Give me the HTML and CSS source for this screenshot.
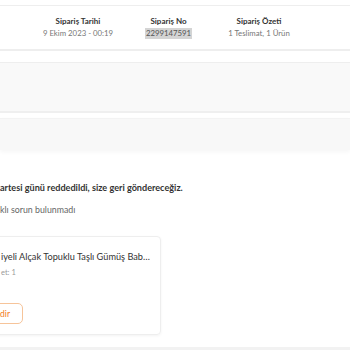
FILE: index.html
```html
<!DOCTYPE html>
<html lang="tr">
<head>
    <meta charset="UTF-8">
    <meta name="viewport" content="width=device-width, initial-scale=1.0">
    <title>Sipariş Detayı</title>
    <link rel="stylesheet" href="styles.css">
</head>
<body>
    <div class="order-header">
        <div class="info-col">
            <span class="info-title">Sipariş Tarihi</span>
            <span class="info-text">9 Ekim 2023 - 00:19</span>
        </div>
        <div class="info-col">
            <span class="info-title">Sipariş No</span>
            <span class="info-text selected">2299147591</span>
        </div>
        <div class="info-col">
            <span class="info-title">Sipariş Özeti</span>
            <span class="info-text">1 Teslimat, 1 Ürün</span>
        </div>
    </div>

    <div class="panel"></div>
    <div class="panel-soft"></div>

    <div class="status">
        <p class="status-title">artesi günü reddedildi, size geri göndereceğiz.</p>
        <p class="status-note">klı sorun bulunmadı</p>
    </div>

    <div class="product-card">
        <p class="product-name">iyeli Alçak Topuklu Taşlı Gümüş Bab…</p>
        <p class="product-qty">et: 1</p>
        <button class="review-btn">dir</button>
    </div>

    <div class="divider"></div>
</body>
</html>
```

FILE: styles.css
```css
body {
    margin: 0;
    background-color: #fff;
    font-family: Lato, "Open Sans", sans-serif;
    color: #333;
    overflow: hidden;
}
p {
    margin: 0;
}

/* order summary strip */
.order-header {
    margin-top: 5px;
    height: 43px;
    border-top: 1px solid #eee;
    border-bottom: 2px solid #eee;
    display: grid;
    grid-template-columns: 90px 91px 90px;
    padding-left: 33px;
    align-content: center;
}
.info-col {
    display: flex;
    flex-direction: column;
    align-items: center;
    gap: 2px;
}
.info-title {
    font-size: 8px;
    font-weight: bold;
    color: #333;
}
.info-text {
    font-size: 7.8px;
    color: #777;
    line-height: 11px;
}
.selected {
    background-color: #d4d4d4;
    color: #555;
    padding: 0 1px;
}

.panel {
    margin-top: 11px;
    height: 48px;
    background-color: #f9f9f9;
    border-top: 1px solid #eee;
    border-bottom: 2px solid #efefef;
}
.panel-soft {
    margin-top: 5px;
    height: 31px;
    background-color: #f8f8f8;
    border-top: 1px solid #f3f3f3;
    box-shadow: 0 2px 4px rgba(0, 0, 0, 0.04);
}

.status {
    padding-top: 32px;
}
.status-title {
    font-size: 9.1px;
    font-weight: bold;
    color: #333;
}
.status-note {
    margin-top: 11px;
    font-size: 8.8px;
    color: #666;
}

.product-card {
    margin-top: 21px;
    margin-left: -20px;
    width: 181px;
    height: 99px;
    box-sizing: border-box;
    padding: 14px 0 0 20px;
    border: 1px solid #eee;
    border-radius: 4px;
    box-shadow: 0 1px 3px rgba(0, 0, 0, 0.05);
}
.product-name {
    font-size: 9.2px;
    color: #333;
}
.product-qty {
    margin-top: 6px;
    font-size: 7.5px;
    color: #999;
}
.review-btn {
    margin-top: 26px;
    margin-left: -30px;
    width: 52px;
    height: 21px;
    padding: 0 12px 0 0;
    text-align: right;
    background-color: #fff;
    border: 1px solid #f6c49a;
    border-radius: 5px;
    color: #f27a1a;
    font-family: Lato, sans-serif;
    font-size: 8.5px;
}

.divider {
    margin-top: 12px;
    height: 3px;
    background-color: #f2f2f2;
}
```
